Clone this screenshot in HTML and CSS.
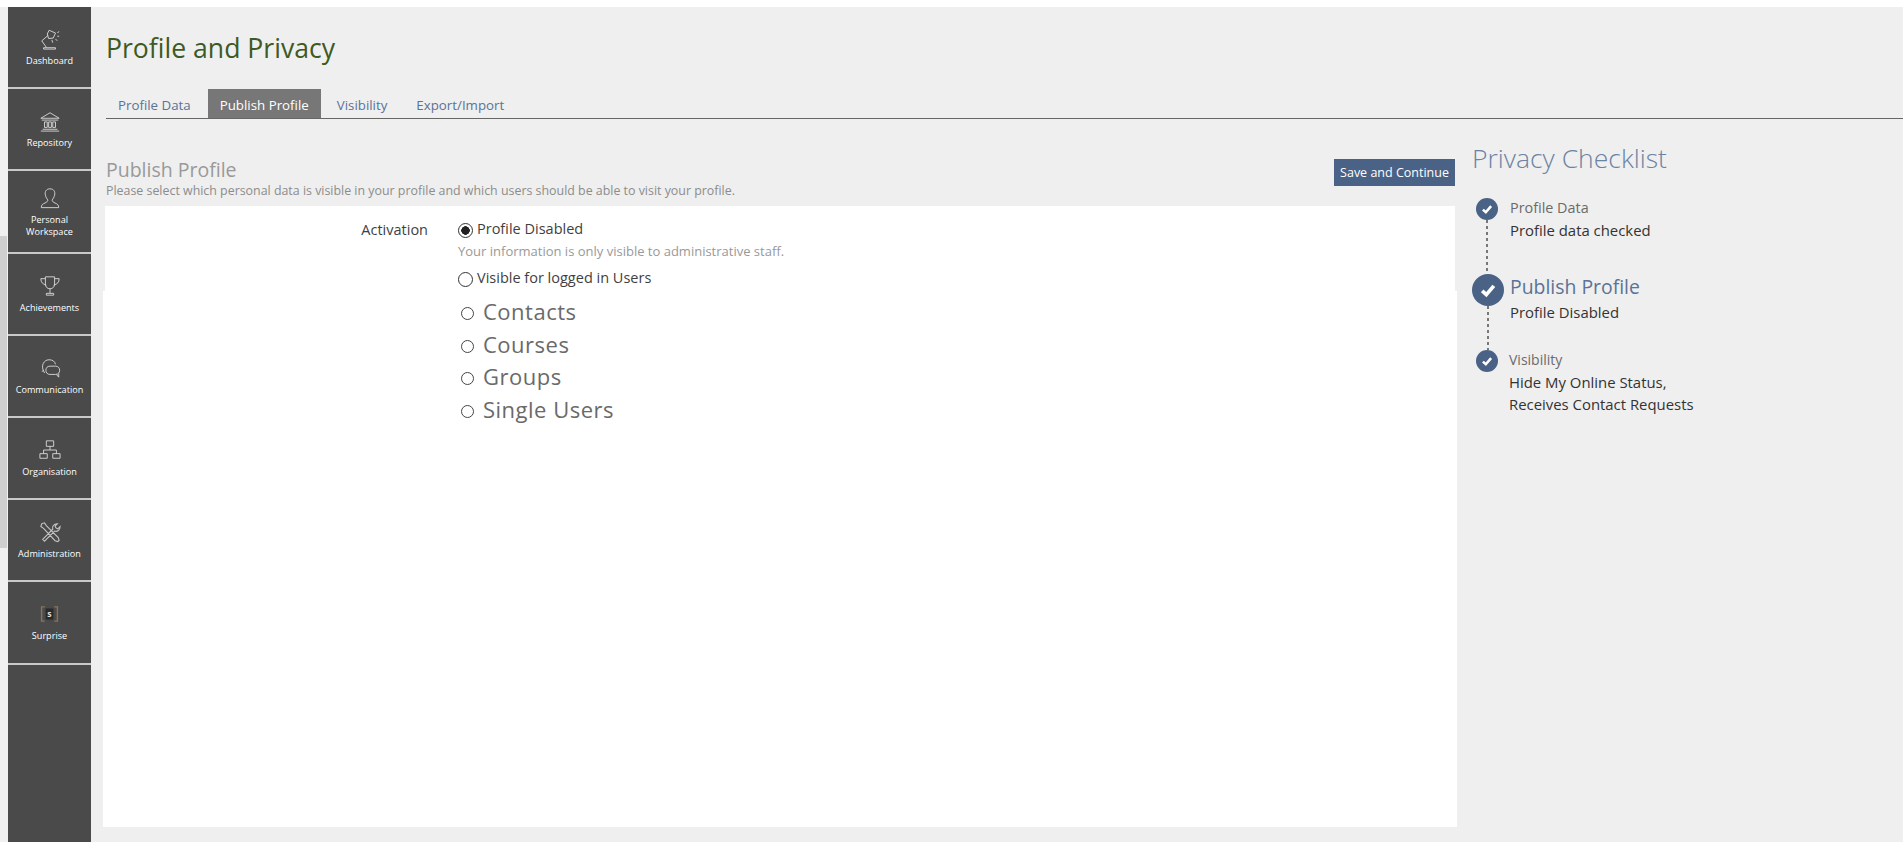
FILE: index.html
```html
<!DOCTYPE html>
<html lang="en">
<head>
<meta charset="utf-8">
<title>Profile and Privacy</title>
<link rel="stylesheet" href="styles.css">
</head>
<body>
<div class="gutter"><div class="gutter-mark"></div></div>
<nav class="sidebar">
  <a class="nav-item"><svg class="nav-icon" viewBox="0 0 24 24"><path d="M5 21.500h13v1.500H5zM8 21L3 14l7-6M11 2.500l7 3-2.500 5.500-5 .5-1.500-5zM14 13l1 3M20 5l2-1M20 9h2M18 12l2 2"/></svg><span>Dashboard</span></a>
  <a class="nav-item"><svg class="nav-icon" viewBox="0 0 24 24"><path d="M2 9l10-6 10 6zM3 11h18M4 21h16M2 23h20M6 13h3v6H6zM10.500 13h3v6h-3zM15 13h3v6h-3z"/></svg><span>Repository</span></a>
  <a class="nav-item two-line"><svg class="nav-icon" viewBox="0 0 24 24"><path d="M12 2c-4 0-6 3-5 7 .3 2 1.500 3.500 2.500 5 .5 1.500-1 2.500-3 3.500-2.500 1-4 2-4 5h19c0-3-1.500-4-4-5-2-1-3.500-2-3-3.500 1-1.500 2.200-3 2.500-5 1-4-1-7-5-7z"/></svg><span>Personal<br>Workspace</span></a>
  <a class="nav-item"><svg class="nav-icon" viewBox="0 0 24 24"><path d="M7 2h10v8c0 3-2 5-5 5s-5-2-5-5zM7 4H2c0 4 2 6 6 7M17 4h5c0 4-2 6-6 7M12 15v5M8 20h8v2H8z"/></svg><span>Achievements</span></a>
  <a class="nav-item"><svg class="nav-icon" viewBox="0 0 24 24"><path d="M5 15C2 10 5 3 11 3c4 0 6.500 2 7 5M5 15l-2 .5M5 15l1 2.500M12 10h6c3 0 4.500 2 4.500 4.500S21 19 18 19h-6c-3 0-4.500-2-4.500-4.500S9 10 12 10zM19 19l2.500 3v-4"/></svg><span>Communication</span></a>
  <a class="nav-item"><svg class="nav-icon" viewBox="0 0 24 24"><path d="M8 2h8v6H8zM12 8v4M5 12h14M5 12v4M19 12v4M1 16h8v5H1zM15 16h8v5h-8z"/></svg><span>Organisation</span></a>
  <a class="nav-item"><svg class="nav-icon tools" viewBox="0 0 24 24"><path d="M3 3l3-1 2 3 13 13 1 3-1.500 1.500-3-1L5 8 2 6zM4 20L15 9c-1-3 1-6 5-6l-2.500 2.500 1 2 2 1L23 6c0 4-3 6-6 5L6 22z"/></svg><span>Administration</span></a>
  <a class="nav-item"><svg class="surprise" viewBox="0 0 24 20"><rect x="7" y="3" width="10" height="14" fill="#2b2b2b"/><path d="M6 1H2v18h4M18 1h4v18h-4"/><text x="12" y="14" text-anchor="middle">s</text></svg><span>Surprise</span></a>
</nav>
<main class="main">
  <h1 class="page-title">Profile and Privacy</h1>
  <div class="tabs">
    <a class="tab">Profile Data</a>
    <a class="tab active">Publish Profile</a>
    <a class="tab">Visibility</a>
    <a class="tab">Export/Import</a>
  </div>
  <div class="content">
    <section class="form-col">
      <div class="form-head">
        <div>
          <h2 class="form-title">Publish Profile</h2>
          <p class="form-sub">Please select which personal data is visible in your profile and which users should be able to visit your profile.</p>
        </div>
        <button class="save">Save and Continue</button>
      </div>
      <div class="panel">
        <div class="field-label">Activation</div>
        <div class="field">
          <div class="radio-row"><span class="radio checked"></span>Profile Disabled</div>
          <p class="hint">Your information is only visible to administrative staff.</p>
          <div class="radio-row second"><span class="radio"></span>Visible for logged in Users</div>
          <ul class="sublist">
            <li>Contacts</li>
            <li>Courses</li>
            <li>Groups</li>
            <li>Single Users</li>
          </ul>
        </div>
      </div>
    </section>
    <aside class="check-col">
      <h2 class="check-title">Privacy Checklist</h2>
      <div class="step first">
        <span class="dot"><svg viewBox="0 0 12 12"><path d="M2.500 6.500l2.500 2.300 4.500-5.300"/></svg></span>
        <div class="step-text"><div class="step-name">Profile Data</div><div class="step-val">Profile data checked</div></div>
      </div>
      <div class="step big">
        <span class="dot"><svg viewBox="0 0 12 12"><path d="M2.500 6.500l2.500 2.300 4.500-5.300"/></svg></span>
        <div class="step-text"><div class="step-name">Publish Profile</div><div class="step-val">Profile Disabled</div></div>
      </div>
      <div class="step last">
        <span class="dot"><svg viewBox="0 0 12 12"><path d="M2.500 6.500l2.500 2.300 4.500-5.300"/></svg></span>
        <div class="step-text"><div class="step-name">Visibility</div><div class="step-val">Hide My Online Status,<br>Receives Contact Requests</div></div>
      </div>
    </aside>
  </div>
</main>
</body>
</html>
```
FILE: styles.css
```css
* { box-sizing: border-box; }
html, body { margin: 0; height: 842px; overflow: hidden; }
body {
  display: flex;
  padding-top: 7px;
  background: #fff;
  font-family: "Open Sans", "Liberation Sans", sans-serif;
  color: #3f3f3f;
}
.gutter { width: 8px; background: #f0f0f0; padding-top: 229px; }
.gutter-mark { width: 7px; height: 312px; background: #cfcfcf; }
.sidebar {
  width: 83px;
  flex: none;
  background: #4a4a4a;
  display: flex;
  flex-direction: column;
}
.nav-item {
  height: 82.200px;
  flex: none;
  border-bottom: 2px solid #c9c9c9;
  color: #fff;
  display: flex;
  flex-direction: column;
  align-items: center;
  font-size: 9.100px;
  line-height: 11.500px;
  text-align: center;
  padding-top: 21px;
}
.nav-item.two-line { padding-top: 16px; }
.nav-icon {
  width: 22px;
  height: 22px;
  margin-bottom: 5px;
  fill: none;
  stroke: #d8d8d8;
  stroke-width: 1;
}
.nav-icon.tools { stroke: #c4c4c4; stroke-width: 1.200; }
.surprise {
  width: 19px;
  height: 16px;
  margin: 3px 0 8px;
  fill: none;
  stroke: #85745c;
  stroke-width: 1.800;
}
.surprise rect { stroke: none; }
.surprise text { fill: #ddd; stroke: none; font: 700 11px "Open Sans", sans-serif; }
.main {
  flex: 1;
  min-width: 0;
  background: #efefef;
  padding: 0 0 15px 15px;
  display: flex;
  flex-direction: column;
}
.page-title {
  margin: 22px 0 0;
  font-size: 26.600px;
  line-height: 38px;
  font-weight: 400;
  color: #3d5a24;
}
.tabs {
  margin: 22px 0 0;
  display: flex;
  height: 30px;
  border-bottom: 1px solid #666;
  font-size: 13.300px;
  line-height: 32px;
  color: #5a7396;
}
.tab { padding: 0 12px; margin-right: 5px; }
.tab.active { background: #777; color: #fff; line-height: 32px; margin-right: 4px; }
.content { flex: 1; display: flex; min-height: 0; }
.form-col { width: 1354px; flex: none; margin-left: -3px; display: flex; flex-direction: column; }
.form-head {
  display: flex;
  justify-content: space-between;
  align-items: flex-end;
  height: 87px;
  padding: 0 2px 7px 3px;
}
.form-title { margin: 0; font-size: 19.500px; line-height: 26px; font-weight: 400; color: #999; }
.form-sub { margin: 0; font-size: 12.400px; line-height: 16px; color: #8c8c8c; }
.save {
  height: 27px;
  width: 121px;
  margin-bottom: 13px;
  border: 0;
  padding: 0;
  background: #4a6285;
  color: #fff;
  font: 12.500px "Open Sans", sans-serif;
}
.panel {
  flex: 1;
  background:
    linear-gradient(#fff, #fff) center top / calc(100% - 4px) 85px no-repeat,
    linear-gradient(#fff, #fff) 0 85px / 100% 100% no-repeat,
    #efefef;
  display: flex;
  padding-top: 13px;
  font-size: 14px;
}
.field-label { width: 325px; text-align: right; padding-top: 1px; line-height: 20px; font-size: 14.500px; }
.field { margin-left: 30px; }
.radio-row { display: flex; align-items: center; line-height: 20px; gap: 4px; font-size: 14.500px; }
.radio { width: 15px; height: 15px; border: 1.500px solid #333; border-radius: 50%; background: #fff; margin-top: 2px; }
.radio.checked { background: radial-gradient(circle, #222 0 4px, #fff 4.500px); }
.hint { margin: 3px 0 0; font-size: 13px; line-height: 18px; color: #999; }
.radio-row.second { margin-top: 8px; }
.sublist {
  margin: 7px 0 0;
  padding: 0 0 0 3px;
  list-style: none;
  font-size: 22px;
  line-height: 32.500px;
  color: #6a6a6a;
  letter-spacing: .5px;
}
.sublist li { display: flex; align-items: center; gap: 9px; }
.sublist li::before {
  content: "";
  width: 11px;
  height: 11px;
  margin-top: 5px;
  border: 1px solid #444;
  border-radius: 50%;
}
.check-col { flex: 1; padding-left: 15px; }
.check-title { margin: 21px 0 0; font-size: 26.500px; line-height: 36px; font-weight: 300; color: #6b83a3; }
.step { display: flex; position: relative; }
.dot {
  flex: none;
  width: 22px;
  height: 22px;
  border-radius: 50%;
  background: #4a6285;
  display: flex;
  align-items: center;
  justify-content: center;
}
.dot svg { width: 14px; height: 14px; fill: none; stroke: #fff; stroke-width: 2.200; }
.step-text { font-size: 14px; line-height: 22px; }
.step-name { color: #6b6b6b; font-size: 14.400px; line-height: 20.500px; }
.step-val { color: #333; font-size: 14.900px; }
.step.first { margin: 22px 0 0 4px; height: 76px; gap: 12px; }
.step.first::after, .step.big::after {
  content: "";
  position: absolute;
  left: 10px;
  top: 22px;
  width: 2px;
  height: 54px;
  background: repeating-linear-gradient(#777 0 3px, transparent 3px 6px);
}
.step.big { height: 76px; gap: 6px; }
.step.big .dot { width: 32px; height: 32px; }
.step.big .dot svg { width: 20px; height: 20px; }
.step.big::after { left: 15px; top: 32px; height: 44px; }
.step.big .step-name { font-size: 19.400px; line-height: 26.500px; color: #5a7396; }
.step.last { margin-left: 4px; gap: 11px; }
.step.last .step-name { font-size: 14px; }
```
